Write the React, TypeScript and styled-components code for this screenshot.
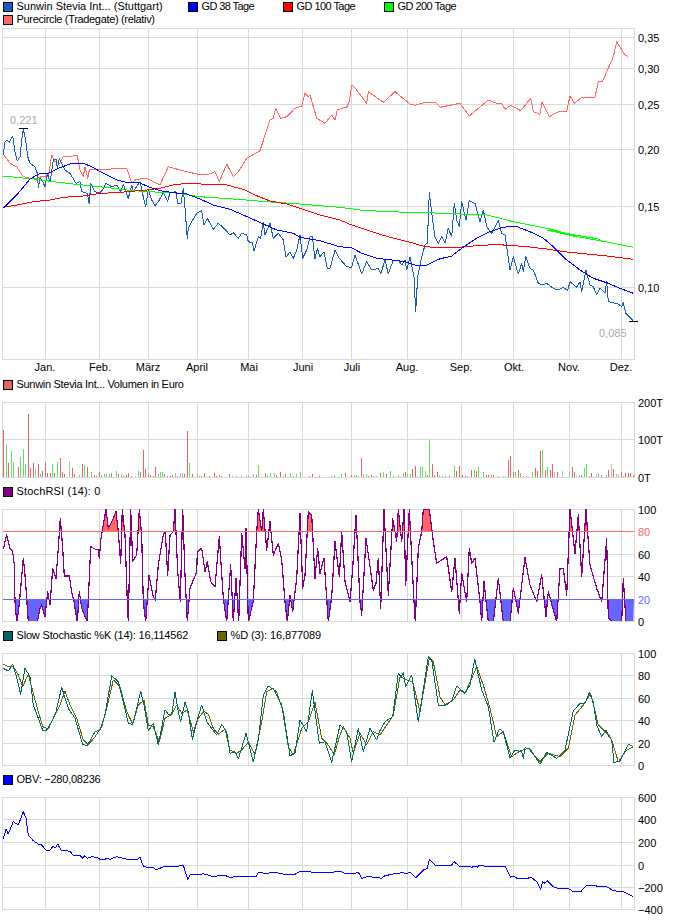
import React from "react";
import styled, { createGlobalStyle } from "styled-components";

const GlobalStyle = createGlobalStyle`
  html, body {
    margin: 0;
    padding: 0;
    background: #fff;
  }
`;

const Page = styled.div`
  width: 681px;
  height: 920px;
  overflow: hidden;
  font-family: "Liberation Sans", Arial, sans-serif;
  font-size: 11px;
  color: #000;
`;

const Legend = styled.div<{ $cols: string }>`
  display: grid;
  grid-template-columns: ${(p) => p.$cols};
  grid-auto-rows: 13px;
  padding-left: 3px;
`;

const LegendItem = styled.div`
  display: flex;
  align-items: center;
  gap: 3.5px;
  white-space: nowrap;
  line-height: 13px;
`;

const Swatch = styled.span<{ $color: string }>`
  display: block;
  width: 8px;
  height: 8px;
  border: 1px solid #000;
  background: ${(p) => p.$color};
`;

const LegendLabel = styled.span<{ $track?: number }>`
  letter-spacing: ${(p) => p.$track ?? 0}px;
`;

const ChartSvg = styled.svg`
  display: block;
  width: 681px;
`;

const GridLine = styled.line`
  stroke: #d9d9d9;
  stroke-width: 1;
  shape-rendering: crispEdges;
`;

const Series = styled.polyline<{ $color: string; $w?: number }>`
  fill: none;
  stroke: ${(p) => p.$color};
  stroke-width: ${(p) => p.$w ?? 1};
  shape-rendering: crispEdges;
  stroke-linejoin: round;
`;

const Bar = styled.line<{ $color: string }>`
  stroke: ${(p) => p.$color};
  stroke-width: 1;
  shape-rendering: crispEdges;
`;

const AxisText = styled.text<{ $color?: string }>`
  font-family: "Liberation Sans", Arial, sans-serif;
  font-size: 11px;
  fill: ${(p) => p.$color ?? "#000"};
`;

// zoom crops were 3x, so points are noted in crop pixels and scaled here
function seg(ox: number, oy: number, pts: string): string {
  return pts
    .trim()
    .split(/\s+/)
    .map((p) => {
      const [x, y] = p.split(",").map(Number);
      return `${(ox + x / 3).toFixed(1)},${(oy + y / 3).toFixed(1)}`;
    })
    .join(" ");
}

const sunwin = [
  seg(0, 0, `10,465 15,425 22,420 28,428 38,408 45,455 52,483 60,470 65,420 70,388 77,420 83,470 90,490 105,500 112,520 115,562 120,535 128,545 135,560 142,520 150,545 155,515 160,480 168,478 172,505 178,475 185,490 195,510 210,520 228,550 240,545 245,575 262,580 268,612 272,550 285,575 298,580 308,570 318,550 335,560 350,555 362,575 370,552 385,595 395,555 400,575 420,545 430,590 437,620 445,570 455,600 465,617 475,605 490,578 503,605 510,578 527,575 533,610 543,610 550,565 555,625`),
  seg(0, 170, `562,205 565,175 575,155 590,130 605,122 612,165 622,145 640,178 655,160 672,175 690,195 700,188 715,205 725,190 740,195 745,215 757,218 762,243 775,200 782,205 790,158 795,195 810,160 820,205 835,190 850,210 858,262 870,245 880,265 890,240 900,195 908,265 920,240 930,200 937,198 945,268 952,235 960,260 972,245 982,295 990,295 1005,240 1018,265`),
  seg(340, 170, `20,290 35,292 45,255 65,312 80,275 95,300 115,295 122,312 135,270 145,312 160,270 175,270 185,285 195,270 200,300 210,260 222,320 227,425 233,320 245,260 255,225 262,220 268,68 275,130 285,200 295,220 305,200 315,220 325,175 335,200 343,100 350,150 358,170 365,95 378,150 388,92 405,100 420,155 430,120 440,170 455,190 475,152 485,190 495,195 510,300 520,260 535,312 545,280 550,305 557,260 570,295 580,300 595,340 610,345 620,340 640,355 655,360 670,352 683,362 690,335 710,352 720,335 725,365 738,300 750,345 760,350 770,375 780,355 795,370 800,335 805,395 835,402 845,410 850,398 857,430 880,453`),
].join(" ");

const gd38 = [
  seg(0, 0, `10,625 50,585 90,537 120,520 145,520 175,505 215,490 250,490 275,500 310,520 350,540 385,548 415,547 445,560 480,572 520,578 560,582 600,597 640,615 690,628 730,645 775,665 830,690 880,700 900,712 935,718`),
  seg(0, 170, `960,212 1018,230`),
  seg(340, 170, `35,233 65,250 110,265 155,270 195,275 230,287 260,285 295,268 335,258 365,235 410,205 450,185 490,172 525,168 570,185 610,205 640,230 680,270 720,300 760,325 800,338 840,355 880,370`),
].join(" ");

const gd100 = [
  seg(0, 0, `10,622 50,615 100,605 150,600 190,592 250,588 300,580 350,578 440,570 480,565 520,555 560,550 620,553 680,555 730,568 770,587 810,603 860,612 900,625 960,645 1020,660`),
  seg(340, 170, `35,165 80,180 125,195 175,208 215,218 255,230 300,233 340,233 380,230 420,226 470,224 510,226 570,231 620,237 680,246 740,252 800,258 880,268`),
].join(" ");

const gd200 = [
  seg(0, 0, `10,528 60,533 110,538 160,545 220,552 300,560 380,570 440,575 520,578 600,590 700,597 800,605 900,612 1020,622`),
  seg(340, 0, `60,630 140,635 260,638 360,642 440,645 520,665 620,685 700,705 780,718`),
  seg(340, 170, `620,180 700,198 780,212 880,232`),
].join(" ");

const purecircle = [
  seg(0, 0, `10,462 30,490 50,500 70,530 100,537 125,530 145,530 155,465 165,485 180,490 190,470 232,467 240,510 250,530 255,500 263,535 268,510 380,505 395,548 410,538 440,535 480,555 505,500 540,510 590,522 620,525 645,515 658,545 680,492 700,530 715,515 740,475 780,452 810,360 820,355 827,325 842,355 860,350 885,325 905,318 915,280 925,290 930,285 950,355 975,370 995,345 1005,360 1012,330 1020,328`),
  seg(340, 0, `0,326 20,322 28,305 35,255 50,270 80,310 85,275 130,307 165,275 210,312 225,316 255,307 285,307 300,322 360,310 388,348 445,300 470,310 485,310 495,328 512,316 542,332 572,295 580,335 600,343 606,307 628,350 655,335 680,335 690,287 703,310 725,292 765,292 775,245 788,243 820,170 830,125 855,165 865,170`),
].join(" ");

// 741 sits just under the plot: the clip hides the line where the value is 0
const rsi = [
  seg(0, 375, `10,522 20,480 30,520 38,530 43,570 45,680 50,741 55,715 62,640 70,550 75,600 80,670 85,741 112,741 120,700 125,690 135,725 143,650 150,690 158,580 168,610 175,520 181,430 188,520 193,603 208,603 215,650 222,680 232,741 238,650 245,700 262,741 272,515 285,522 295,525 298,550 303,490 318,403 325,460 340,430 348,410 355,470 362,565 367,403 375,480 382,680 385,741 392,403 398,560 410,540 418,403 425,480 430,680 437,741 447,600 460,665 466,675 475,570 490,480 496,470 503,600 510,480 520,470 525,403 533,590 541,680 548,403 555,600 562,741 570,640 590,590 592,530 605,520 615,590 622,560 632,620 645,635 658,485 670,670 680,741 692,570 700,741 708,610 716,741 725,475 735,580 738,460 745,741 760,680 770,470 775,403 785,470 790,403 800,525 810,440 820,540 835,505 845,555 855,680 862,741 870,660 878,710 890,610 900,415 908,640 915,600 925,410 935,420 945,610 953,520 960,595 972,550 985,741 995,665 1005,500 1018,605`),
  seg(340, 375, `0,570 5,470 15,620 30,680 38,580 48,420 60,680 65,720 78,490 100,645 108,625 115,550 122,700 132,403 145,660 158,430 170,500 175,403 185,500 192,403 197,630 208,403 222,680 226,741 235,520 245,470 250,403 268,403 280,500 290,565 320,545 335,650 345,550 358,715 365,595 380,680 388,520 395,565 405,550 420,680 425,741 432,620 445,741 460,741 475,610 490,741 510,741 520,640 535,715 555,548 570,630 590,680 605,600 618,725 625,650 650,741 660,580 670,580 680,660 690,403 705,535 715,420 725,605 738,403 750,570 770,640 785,680 800,492 805,730 820,741 845,741 850,610 858,741 880,741`),
].join(" ");

const stochK = [
  seg(0, 625, `10,130 25,138 38,118 48,150 62,208 75,130 90,155 100,240 115,280 128,316 140,315 155,290 168,260 185,187 205,250 225,280 248,358 262,362 285,320 300,315 315,270 335,152 355,170 370,230 385,295 398,298 410,250 422,198 432,240 445,318 460,295 475,360 495,255 505,268 515,268 525,202 535,260 542,290 555,232 565,260 577,343 590,290 605,240 620,290 635,310 650,330 665,298 680,320 690,385 705,380 715,402 738,325 760,410 775,345 790,210 805,183 830,200 850,260 870,392 885,385 900,285 920,320 937,197 958,355 975,350 995,412 1018,310`),
  seg(340, 625, `0,300 20,320 35,410 55,310 70,380 90,310 110,345 118,320 135,290 158,275 175,145 183,155 190,142 197,185 215,150 235,290 265,95 275,105 295,240 315,242 335,228 350,183 375,205 390,180 404,102 425,195 445,245 462,352 478,312 490,320 510,400 525,375 545,380 550,400 555,368 570,372 600,418 620,382 650,400 675,375 700,258 720,235 735,235 748,203 760,230 770,300 785,335 797,315 815,345 822,413 840,408 865,358 880,365`),
].join(" ");

const stochD = [
  seg(0, 625, `10,118 25,125 40,125 55,150 68,185 85,148 100,205 115,260 128,305 145,312 160,280 178,245 195,198 210,240 230,280 250,345 265,360 285,335 305,305 320,250 340,165 360,185 380,260 398,297 415,240 432,225 445,300 460,305 478,350 495,280 515,268 530,240 545,265 562,255 580,320 595,280 612,258 625,268 640,310 655,328 675,312 690,375 710,385 725,375 745,352 765,388 785,290 800,200 820,190 845,240 865,365 880,390 905,310 925,290 945,232 965,340 985,360 1003,390 1018,335`),
  seg(340, 625, `10,305 30,340 40,385 60,325 80,360 100,320 120,330 140,300 160,270 180,155 200,165 218,170 240,260 268,100 280,110 300,215 315,240 340,225 360,195 375,205 395,160 410,125 430,180 450,250 470,335 490,320 515,395 540,378 565,370 600,410 625,385 660,395 685,370 705,270 730,240 752,205 775,300 800,325 815,345 835,410 860,375 880,365`),
].join(" ");

const obv = [
  seg(0, 770, `10,207 18,178 25,192 40,155 55,165 70,125 78,145 85,195 100,212 115,222 125,225 137,240 150,240 158,230 168,232 173,222 183,240 210,244 220,256 240,256 247,265 253,257 262,265 275,260 290,262 300,268 315,268 320,265 330,268 350,260 375,266 385,270 395,268 410,270 420,262 430,288 440,292 460,292 468,300 490,290 510,290 525,290 550,286 563,328 570,315 600,313 610,311 640,320 660,316 675,316 688,322 735,318 745,320 770,318 775,308 800,310 815,308 830,308 850,312 870,312 885,313 900,304 930,304 935,308 1000,307 1005,304 1020,304`),
  seg(340, 770, `0,304 15,310 45,310 55,307 65,325 80,320 110,322 125,325 135,317 150,314 170,310 190,308 200,311 210,307 228,323 250,300 262,296 268,268 285,285 335,285 342,275 358,288 385,288 395,292 405,288 412,292 418,285 440,290 495,288 512,322 520,318 535,327 575,323 590,335 602,358 608,335 615,340 622,332 640,350 655,355 685,355 700,365 722,365 740,345 765,345 772,350 800,350 820,362 850,365 880,380`),
].join(" ");

const volLeft = `R10,165 G19,207 R25,265 G34,228 G40,260 R55,275 G61,245 G70,222 G76,268 R85,118 R91,278 R100,265 A106,282 R115,268 G121,297 R127,287 R136,262 R142,293 R151,293 G157,267 R163,293 G172,262 R181,250 R187,290 R193,297 A208,258 R217,278 R223,297 G238,300 R247,268 G253,270 R262,275 G274,290 R283,300 R289,302 R298,290 G304,300 G313,297 G319,297 G328,297 R334,295 G349,288 R355,297 G364,297 R370,302 R379,300 R385,295 R394,302 A406,302 G415,288 R421,292 R430,225 R436,282 R445,297 R451,300 R460,302 R466,277 G475,297 G481,292 G487,292 R493,298 R502,302 R511,302 R517,300 G526,293 R532,303 A541,294 A547,294 R553,297 R562,168 G568,264 R577,297 G592,297 A598,303 R604,303 R613,294 R628,303 R643,295 R649,303 R658,300 G664,302 R688,297 G697,303 G709,302 G724,302 G739,302 R745,303 G760,297 R769,300 G775,270 R796,295 G802,300 G811,295 G823,295 R829,300 R841,292 G850,302 R856,296 G871,294 R880,302 G889,298 G901,291 R928,302 R937,297 R958,303 G994,303 G1003,300`;
const volRight = `G3,297 R15,295 R33,300 G42,300 G48,300 G54,303 R63,250 G69,297 G78,297 R84,303 R93,300 A99,302 A108,303 R120,294 G129,291 R138,296 G150,288 G159,303 G174,300 G189,294 R195,291 G202,297 G210,297 R216,282 R225,273 A231,303 G240,276 G246,276 G255,288 R261,300 G267,195 R276,267 R282,300 R291,291 A297,300 G306,303 R315,303 G327,300 G342,273 R348,288 R357,273 R366,300 R375,303 A381,303 R393,285 G402,285 R408,288 G414,276 G429,291 R438,300 R444,300 R453,300 R459,300 G474,303 A489,303 G495,303 R504,255 R510,243 R519,291 G525,291 R534,285 G540,294 G549,303 R558,303 G576,291 R585,279 R591,288 R600,228 G606,225 R615,285 G621,276 R630,285 R636,267 A642,291 R651,291 A666,288 G687,291 R696,276 R702,291 A708,303 G717,300 R723,300 G732,279 G738,267 R747,303 R753,294 A768,297 G774,294 R783,300 A798,300 R804,285 A813,267 R819,282 A828,297 A834,297 R843,291 A849,303 R855,294 R864,294 R870,294 R879,300`;

const barColors: Record<string, string> = { R: "#e06666", G: "#66dd66", A: "#bbbbbb" };

function parseBars(ox: number, src: string) {
  return src.split(" ").map((t) => {
    const [x, y] = t.slice(1).split(",").map(Number);
    return { x: Math.floor(ox + x / 3) + 0.5, top: 375 + y / 3, color: barColors[t[0]] };
  });
}

const bars = [...parseBars(0, volLeft), ...parseBars(340, volRight)];

const vGrid = [2, 45, 99, 148, 197, 248, 302, 351, 407, 461, 513, 569, 621, 634];
const months: [string, number][] = [
  ["Jan.", 45],
  ["Feb.", 100],
  ["März", 148],
  ["April", 197],
  ["Mai", 249],
  ["Juni", 303],
  ["Juli", 352],
  ["Aug.", 407],
  ["Sep.", 461],
  ["Okt.", 514],
  ["Nov.", 569],
  ["Dez.", 621],
];

interface ChartProps {
  top: number;
  height: number;
  plotTop: number;
  plotBottom: number;
  rows: [number, string][];
  children?: React.ReactNode;
}

function Chart({ top, height, plotTop, plotBottom, rows, children }: ChartProps) {
  return (
    <ChartSvg height={height} viewBox={`0 ${top} 681 ${height}`}>
      {vGrid.map((x) => (
        <GridLine key={x} x1={x + 0.5} x2={x + 0.5} y1={plotTop} y2={plotBottom + 1} />
      ))}
      {[plotTop, plotBottom, ...rows.map((r) => r[0])].map((y, i) => (
        <GridLine key={i} x1={2} x2={635} y1={y + 0.5} y2={y + 0.5} />
      ))}
      {children}
      {rows.map(([y, label]) =>
        label ? (
          <AxisText key={label} x={638} y={y + 5}>
            {label}
          </AxisText>
        ) : null
      )}
    </ChartSvg>
  );
}

interface EntryProps {
  color: string;
  track?: number;
  children: React.ReactNode;
}

const LegendEntry = ({ color, track, children }: EntryProps) => (
  <LegendItem>
    <Swatch $color={color} />
    <LegendLabel $track={track}>{children}</LegendLabel>
  </LegendItem>
);

export default function App() {
  return (
    <Page>
      <GlobalStyle />
      <Legend $cols="185px 95px 101px auto">
        <LegendEntry color="#1a5cb8">Sunwin Stevia Int... (Stuttgart)</LegendEntry>
        <LegendEntry color="#0000ff" track={-0.6}>GD 38 Tage</LegendEntry>
        <LegendEntry color="#ff0000" track={-0.55}>GD 100 Tage</LegendEntry>
        <LegendEntry color="#00ff00" track={-0.55}>GD 200 Tage</LegendEntry>
        <LegendEntry color="#ff6666" track={-0.33}>Purecircle (Tradegate) (relativ)</LegendEntry>
      </Legend>
      <Chart
        top={26}
        height={352}
        plotTop={28}
        plotBottom={359}
        rows={[
          [37, "0,35"],
          [68, "0,30"],
          [104, "0,25"],
          [149, "0,20"],
          [206, "0,15"],
          [287, "0,10"],
        ]}
      >
        <Series $color="#ff6666" points={purecircle} />
        <Series $color="#1a5cb8" points={sunwin} />
        <Series $color="#00ff00" points={gd200} />
        <Series $color="#ff0000" points={gd100} />
        <Series $color="#0000ff" points={gd38} />
        <Bar $color="#000" x1={19} x2={28} y1={128.5} y2={128.5} />
        <Bar $color="#000" x1={629} x2={638} y1={321.5} y2={321.5} />
        <AxisText $color="#aaaaaa" x={10} y={124}>
          0,221
        </AxisText>
        <AxisText $color="#aaaaaa" x={599} y={337}>
          0,085
        </AxisText>
        {months.map(([m, x]) => (
          <AxisText key={m} x={x} y={371} textAnchor="middle">
            {m}
          </AxisText>
        ))}
      </Chart>

      <Legend $cols="auto">
        <LegendEntry color="#e06666" track={-0.3}>Sunwin Stevia Int... Volumen in Euro</LegendEntry>
      </Legend>
      <Chart
        top={391}
        height={94}
        plotTop={402}
        plotBottom={477}
        rows={[
          [402, "200T"],
          [439, "100T"],
          [477, "0T"],
        ]}
      >
        {bars.map((b, i) => (
          <Bar key={i} $color={b.color} x1={b.x} x2={b.x} y1={b.top} y2={477} />
        ))}
      </Chart>

      <Legend $cols="auto">
        <LegendEntry color="#800080" track={0.17}>StochRSI (14): 0</LegendEntry>
      </Legend>
      <Chart
        top={498}
        height={131}
        plotTop={509}
        plotBottom={621}
        rows={[
          [509, "100"],
          [554, "60"],
          [576, "40"],
          [621, "0"],
        ]}
      >
        <defs>
          <clipPath id="rsiHigh">
            <rect x={0} y={509} width={640} height={22} />
          </clipPath>
          <clipPath id="rsiLow">
            <rect x={0} y={599} width={640} height={22} />
          </clipPath>
          <clipPath id="rsiPlot">
            <rect x={0} y={509} width={640} height={112} />
          </clipPath>
        </defs>
        <polygon fill="#ff6666" clipPath="url(#rsiHigh)" points={`3,531 ${rsi} 634,531`} />
        <polygon fill="#6666ff" clipPath="url(#rsiLow)" points={`3,599 ${rsi} 634,599`} />
        <Series $color="#800080" points={rsi} $w={1.2} clipPath="url(#rsiPlot)" />
        <Bar $color="#ff6666" x1={3} x2={634} y1={531.5} y2={531.5} />
        <Bar $color="#6666ff" x1={3} x2={634} y1={599.5} y2={599.5} />
        <AxisText $color="#ff6666" x={638} y={536}>
          80
        </AxisText>
        <AxisText $color="#6666ff" x={638} y={604}>
          20
        </AxisText>
      </Chart>

      <Legend $cols="214px auto">
        <LegendEntry color="#006666" track={-0.18}>Slow Stochastic %K (14): 16,114562</LegendEntry>
        <LegendEntry color="#666600" track={-0.1}>%D (3): 16,877089</LegendEntry>
      </Legend>
      <Chart
        top={642}
        height={131}
        plotTop={653}
        plotBottom={765}
        rows={[
          [653, "100"],
          [675, "80"],
          [698, "60"],
          [720, "40"],
          [743, "20"],
          [765, "0"],
        ]}
      >
        <Series $color="#666600" points={stochD} />
        <Series $color="#006666" points={stochK} />
      </Chart>

      <Legend $cols="auto">
        <LegendEntry color="#0000ff" track={-0.23}>OBV: −280,08236</LegendEntry>
      </Legend>
      <Chart
        top={786}
        height={134}
        plotTop={797}
        plotBottom={909}
        rows={[
          [797, "600"],
          [819, "400"],
          [842, "200"],
          [865, "0"],
          [887, "−200"],
          [909, "−400"],
        ]}
      >
        <Series $color="#0000ff" points={obv} />
      </Chart>
    </Page>
  );
}
